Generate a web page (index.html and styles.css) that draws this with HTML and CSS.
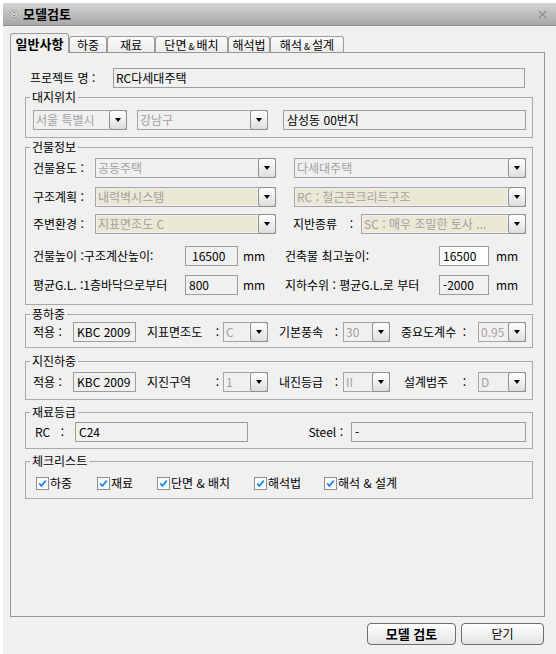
FILE: index.html
```html
<!DOCTYPE html>
<html lang="ko">
<head>
<meta charset="utf-8">
<title>모델검토</title>
<link rel="stylesheet" href="styles.css">
</head>
<body>
<div class="window">
  <div class="titlebar">
    <svg class="ticon" width="8" height="8" viewBox="0 0 8 8"><circle cx="4" cy="4" r="3.6" fill="#dcdcdc" stroke="#9a9a9a" stroke-width="0.8"/><path d="M2.4 3.4 L4 1.9 L5.6 3.4 M2.4 4.6 L4 6.1 L5.6 4.6" fill="none" stroke="#6a6a6a" stroke-width="0.9"/></svg>
    <span class="ttext">모델검토</span>
    <svg class="close" width="9" height="9" viewBox="0 0 9 9"><path d="M1 1 L8 8 M8 1 L1 8" stroke="#8c8c8c" stroke-width="1.2"/></svg>
  </div>

  <div class="tabs">
    <div class="tab active t1">일반사항</div>
    <div class="tab t2">하중</div>
    <div class="tab t3">재료</div>
    <div class="tab t4">단면<span class="amp">&amp;</span>배치</div>
    <div class="tab t5">해석법</div>
    <div class="tab t6">해석<span class="amp">&amp;</span>설계</div>
  </div>

  <div class="panel">
    <div class="proj-row">
      <span class="lbl-proj">프로젝트 명 :</span>
      <div class="input w412 pl2">RC다세대주택</div>
    </div>

    <fieldset class="grp g-site">
      <legend>대지위치</legend>
      <div class="row">
        <div class="combo w94"><span class="val">서울 특별시</span><span class="btn"></span></div>
        <div class="combo w131 ml10"><span class="val">강남구</span><span class="btn"></span></div>
        <div class="input w243 ml15">삼성동 00번지</div>
      </div>
    </fieldset>

    <fieldset class="grp g-bldg">
      <legend>건물정보</legend>
      <div class="row">
        <span class="lbl w62">건물용도 :</span>
        <div class="combo w181"><span class="val">공동주택</span><span class="btn"></span></div>
        <div class="combo w232 ml18"><span class="val">다세대주택</span><span class="btn"></span></div>
      </div>
      <div class="row r2">
        <span class="lbl w62">구조계획 :</span>
        <div class="combo beige w181"><span class="val">내력벽시스템</span><span class="btn"></span></div>
        <div class="combo beige w232 ml18"><span class="val">RC : 철근콘크리트구조</span><span class="btn"></span></div>
      </div>
      <div class="row r3">
        <span class="lbl w62">주변환경 :</span>
        <div class="combo beige w181"><span class="val">지표면조도 C</span><span class="btn"></span></div>
        <span class="lbl split w68 ml17 pr8"><span>지반종류</span><span>:</span></span>
        <div class="combo beige w165"><span class="val">SC : 매우 조밀한 토사 ...</span><span class="btn"></span></div>
      </div>
      <div class="row r4">
        <span class="lbl w152">건물높이 :구조계산높이:</span>
        <div class="input w53 pl6">16500</div>
        <span class="lbl w47 pl5">mm</span>
        <span class="lbl w154">건축물 최고높이:</span>
        <div class="input white w50">16500</div>
        <span class="lbl pl7">mm</span>
      </div>
      <div class="row r5">
        <span class="lbl w152">평균G.L. :1층바닥으로부터</span>
        <div class="input w53">800</div>
        <span class="lbl w47 pl5">mm</span>
        <span class="lbl w154">지하수위 : 평균G.L.로 부터</span>
        <div class="input w50">-2000</div>
        <span class="lbl pl7">mm</span>
      </div>
    </fieldset>

    <fieldset class="grp g-wind">
      <legend>풍하중</legend>
      <div class="row">
        <span class="lbl w40">적용 :</span>
        <div class="input w63">KBC 2009</div>
        <span class="lbl split w76 ml11 pr4"><span>지표면조도</span><span>:</span></span>
        <div class="combo w45"><span class="val">C</span><span class="btn"></span></div>
        <span class="lbl split w64 ml11 pr5"><span>기본풍속</span><span>:</span></span>
        <div class="combo w47"><span class="val">30</span><span class="btn"></span></div>
        <span class="lbl split w77 ml11 pr12"><span>중요도계수</span><span>:</span></span>
        <div class="combo w48"><span class="val">0.95</span><span class="btn"></span></div>
      </div>
    </fieldset>

    <fieldset class="grp g-seis">
      <legend>지진하중</legend>
      <div class="row">
        <span class="lbl w40">적용 :</span>
        <div class="input w63">KBC 2009</div>
        <span class="lbl split w76 ml11 pr4"><span>지진구역</span><span>:</span></span>
        <div class="combo w45"><span class="val">1</span><span class="btn"></span></div>
        <span class="lbl split w64 ml11 pr5"><span>내진등급</span><span>:</span></span>
        <div class="combo w47"><span class="val">II</span><span class="btn"></span></div>
        <span class="lbl split w77 ml11 pr12 pl3"><span>설계범주</span><span>:</span></span>
        <div class="combo w48"><span class="val">D</span><span class="btn"></span></div>
      </div>
    </fieldset>

    <fieldset class="grp g-mat">
      <legend>재료등급</legend>
      <div class="row">
        <span class="lbl split w42 pl2 pr11"><span>RC</span><span>:</span></span>
        <div class="input w173">C24</div>
        <span class="lbl grow right">Steel :</span>
        <div class="input w175 ml8">-</div>
      </div>
    </fieldset>

    <fieldset class="grp g-chk">
      <legend>체크리스트</legend>
      <div class="row">
        <label class="chk ck1"><svg width="13" height="13" viewBox="0 0 13 13"><rect x="0.5" y="0.5" width="12" height="12" fill="#fbfbfb" stroke="#8a8f96"/><path d="M3.2 6.4 L5.4 8.8 L9.8 3.6" fill="none" stroke="#2189e6" stroke-width="1.8"/></svg><span>하중</span></label>
        <label class="chk ck2"><svg width="13" height="13" viewBox="0 0 13 13"><rect x="0.5" y="0.5" width="12" height="12" fill="#fbfbfb" stroke="#8a8f96"/><path d="M3.2 6.4 L5.4 8.8 L9.8 3.6" fill="none" stroke="#2189e6" stroke-width="1.8"/></svg><span>재료</span></label>
        <label class="chk ck3"><svg width="13" height="13" viewBox="0 0 13 13"><rect x="0.5" y="0.5" width="12" height="12" fill="#fbfbfb" stroke="#8a8f96"/><path d="M3.2 6.4 L5.4 8.8 L9.8 3.6" fill="none" stroke="#2189e6" stroke-width="1.8"/></svg><span>단면 &amp; 배치</span></label>
        <label class="chk ck4"><svg width="13" height="13" viewBox="0 0 13 13"><rect x="0.5" y="0.5" width="12" height="12" fill="#fbfbfb" stroke="#8a8f96"/><path d="M3.2 6.4 L5.4 8.8 L9.8 3.6" fill="none" stroke="#2189e6" stroke-width="1.8"/></svg><span>해석법</span></label>
        <label class="chk ck5"><svg width="13" height="13" viewBox="0 0 13 13"><rect x="0.5" y="0.5" width="12" height="12" fill="#fbfbfb" stroke="#8a8f96"/><path d="M3.2 6.4 L5.4 8.8 L9.8 3.6" fill="none" stroke="#2189e6" stroke-width="1.8"/></svg><span>해석 &amp; 설계</span></label>
      </div>
    </fieldset>
  </div>

  <div class="buttons">
    <div class="button primary">모델 검토</div>
    <div class="button close-btn">닫기</div>
  </div>
</div>
</body>
</html>
```

FILE: styles.css
```css
* { box-sizing: border-box; }
html, body { margin: 0; padding: 0; }
body {
  width: 556px;
  height: 654px;
  overflow: hidden;
  background: #ffffff;
  font-family: "Noto Sans CJK KR", "Noto Sans", sans-serif;
  font-size: 12px;
  line-height: 14px;
  color: #000;
}

.window {
  margin: 3px 0 0 3px;
  width: 553px;
  height: 651px;
  background: #f0f0f0;
  display: flex;
  flex-direction: column;
}

/* title bar */
.titlebar {
  flex: none;
  height: 23px;
  display: flex;
  align-items: center;
  padding: 0 9px 0 7px;
  background: linear-gradient(#d4d4d4, #a8a8a8);
  border-bottom: 1px solid #8e8e8e;
}
.ticon { margin-right: 5px; }
.ttext { flex: 1; font-weight: bold; font-size: 13px; }

/* tabs */
.tabs {
  flex: none;
  display: flex;
  align-items: flex-end;
  height: 19px;
  margin: 7px 0 0 7px;
}
.tab {
  height: 16px;
  border: 1px solid #9c9c9c;
  border-bottom: none;
  border-radius: 3px 3px 0 0;
  background: linear-gradient(#fbfbfb, #ebebeb);
  text-align: center;
  font-size: 12px;
  line-height: 15px;
  white-space: nowrap;
}
.tab .amp { font-size: 9px; margin: 0 2px; }
.tab.active {
  position: relative;
  z-index: 1;
  height: 20px;
  margin-bottom: -1px;
  background: #f0f0f0;
  font-weight: bold;
  font-size: 13px;
  line-height: 20px;
}
.t1 { width: 59px; }
.t2 { width: 38px; }
.t3 { width: 48px; }
.t4 { width: 73px; }
.t5 { width: 42px; }
.t6 { width: 74px; }

/* panel */
.panel {
  flex: none;
  margin-left: 7px;
  width: 535px;
  height: 565px;
  border: 1px solid #969696;
  padding: 15px 11px 0 14px;
}

.proj-row {
  display: flex;
  align-items: center;
  height: 20px;
  padding-left: 5px;
}
.lbl-proj { width: 83px; white-space: pre; }

/* groups */
fieldset.grp {
  margin: 0;
  padding: 0 6px 0 7px;
  border: 1px solid #a9a9a9;
  min-width: 0;
}
fieldset.grp legend {
  padding: 0 2px;
  margin-left: -3px;
  line-height: 14px;
}
.g-site { margin-top: 2px !important; padding-top: 6px !important; padding-bottom: 7px !important; }
.g-bldg { margin-top: 2px !important; padding-top: 4px !important; padding-bottom: 9px !important; }
.g-wind { margin-top: 2px !important; padding-top: 1px !important; padding-bottom: 5px !important; }
.g-seis { margin-top: 6px !important; padding-top: 4px !important; padding-bottom: 7px !important; }
.g-mat  { margin-top: 5px !important; padding-top: 3px !important; padding-bottom: 6px !important; }
.g-chk  { margin-top: 5px !important; padding-top: 5px !important; padding-bottom: 5px !important; }

.row {
  display: flex;
  align-items: center;
  height: 20px;
}
.g-bldg .r2 { margin-top: 9px; }
.g-bldg .r3 { margin-top: 7px; }
.g-bldg .r4 { margin-top: 12px; }
.g-bldg .r5 { margin-top: 9px; }

.lbl { white-space: pre; flex: none; }
.lbl.split { display: flex; justify-content: space-between; }
.lbl.grow { flex: 1; }
.lbl.right { text-align: right; }

/* inputs */
.input {
  flex: none;
  height: 20px;
  border: 1px solid #9c9c9c;
  background: #f0f0f0;
  padding: 0 3px;
  line-height: 17px;
  white-space: nowrap;
  overflow: hidden;
}
.input.white { background: #ffffff; }

/* combos */
.combo {
  flex: none;
  display: flex;
  height: 20px;
  border: 1px solid #a4a4a4;
  background: #f0f0f0;
}
.combo .val {
  flex: 1;
  min-width: 0;
  padding-left: 2px;
  color: #a2a2a2;
  line-height: 17px;
  white-space: nowrap;
  overflow: hidden;
}
.combo.beige .val {
  margin: 1px;
  padding-left: 1px;
  background: #ebe8d6;
  line-height: 15px;
}
.combo .btn {
  flex: none;
  width: 18px;
  margin: -1px -1px -1px 0;
  border: 1px solid #8f8f8f;
  border-radius: 3px;
  background: linear-gradient(#ffffff, #dedede);
  display: flex;
  align-items: center;
  justify-content: center;
}
.combo .btn::after {
  content: "";
  width: 0;
  height: 0;
  border-left: 3px solid transparent;
  border-right: 3px solid transparent;
  border-top: 4px solid #000;
}

/* checkboxes */
.chk {
  flex: none;
  display: flex;
  align-items: center;
  gap: 1px;
  white-space: pre;
}
.ck1 { width: 61px; margin-left: 3px; }
.ck2 { width: 60px; }
.ck3 { width: 97px; }
.ck4 { width: 70px; }

/* widths & spacing */
.w40 { width: 40px; }
.w42 { width: 42px; }
.w45 { width: 45px; }
.w47 { width: 47px; }
.w48 { width: 48px; }
.w50 { width: 50px; }
.w53 { width: 53px; }
.w62 { width: 62px; }
.w63 { width: 63px; }
.w64 { width: 64px; }
.w68 { width: 68px; }
.w76 { width: 76px; }
.w77 { width: 77px; }
.w94 { width: 94px; }
.w131 { width: 131px; }
.w152 { width: 152px; }
.w154 { width: 154px; }
.w165 { width: 165px; }
.w173 { width: 173px; }
.w175 { width: 175px; }
.w181 { width: 181px; }
.w232 { width: 232px; }
.w243 { width: 243px; }
.w412 { width: 412px; }
.ml8 { margin-left: 8px; }
.ml10 { margin-left: 10px; }
.ml11 { margin-left: 11px; }
.ml15 { margin-left: 15px; }
.ml17 { margin-left: 17px; }
.ml18 { margin-left: 18px; }
.pl2 { padding-left: 2px; }
.pl3 { padding-left: 3px; }
.pl5 { padding-left: 5px; }
.pl6 { padding-left: 6px; }
.pl7 { padding-left: 7px; }
.pr4 { padding-right: 4px; }
.pr5 { padding-right: 5px; }
.pr8 { padding-right: 8px; }
.pr11 { padding-right: 11px; }
.pr12 { padding-right: 12px; }

/* bottom buttons */
.buttons {
  flex: none;
  display: flex;
  justify-content: flex-end;
  gap: 5px;
  padding: 6px 12px 0 0;
}
.button {
  height: 22px;
  border: 1px solid #6e6e6e;
  border-radius: 4px;
  background: linear-gradient(#ffffff, #e4e4e4);
  display: flex;
  align-items: center;
  justify-content: center;
  font-size: 12px;
}
.button.primary { width: 89px; font-weight: bold; font-size: 13px; }
.button.close-btn { width: 83px; }
```
